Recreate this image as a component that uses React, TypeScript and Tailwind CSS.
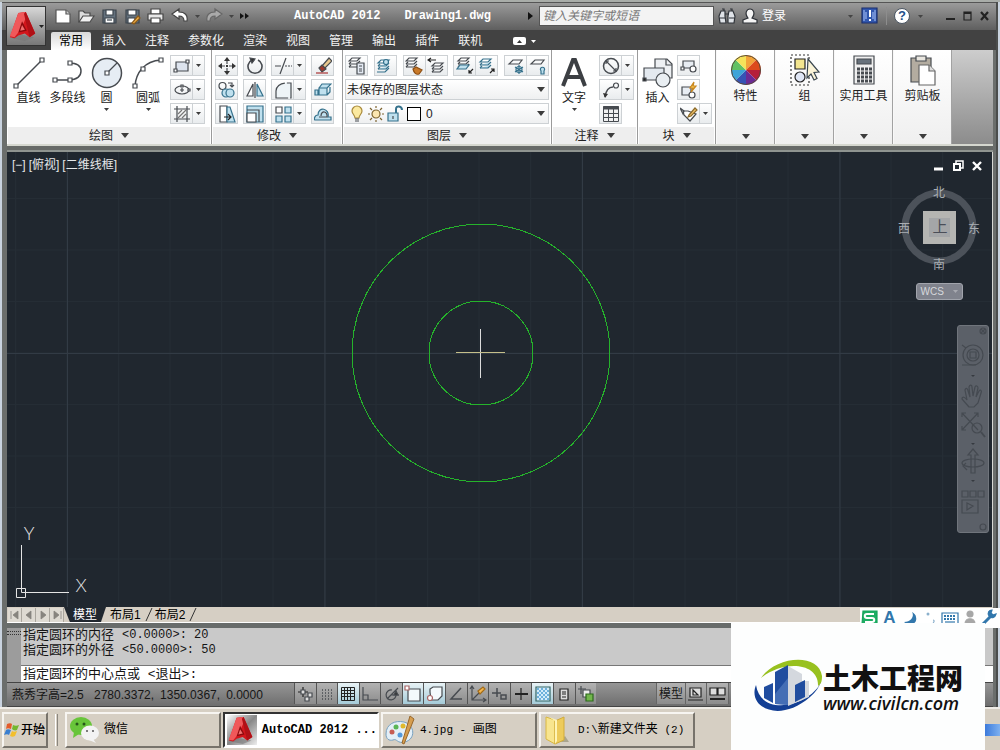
import React from 'react';

type Kids = { children?: React.ReactNode };

const CJK = "font-['Liberation_Sans','Noto_Sans_CJK_SC',sans-serif]";
const MONO = "font-['Liberation_Mono','Noto_Sans_CJK_SC',monospace]";

function Ico({ w = 18, h = 18, s = '#474b50', children }: Kids & { w?: number; h?: number; s?: string }) {
  return (
    <svg width={w} height={h} viewBox={`0 0 ${w} ${h}`} fill="none" stroke={s} strokeWidth="1.2" className="shrink-0" aria-hidden="true">
      {children}
    </svg>
  );
}

function Down({ color = '#3c3c3c', big = false }: { color?: string; big?: boolean }) {
  return big ? (
    <svg width="8" height="5" viewBox="0 0 8 5" aria-hidden="true"><path d="M0 0h8L4 5z" fill={color} /></svg>
  ) : (
    <svg width="5" height="3" viewBox="0 0 5 3" aria-hidden="true"><path d="M0 0h5L2.5 3z" fill={color} /></svg>
  );
}

const cell = 'flex h-[21px] items-center justify-center border border-[#cdd1d4] bg-linear-to-b from-white to-[#e9ecee]';

function Tool({ name, children }: Kids & { name: string }) {
  return <button aria-label={name} className={`${cell} w-[23px]`}>{children}</button>;
}

function Split({ name, children }: Kids & { name: string }) {
  return (
    <div className="flex">
      <button aria-label={name} className={`${cell} w-[23px]`}>{children}</button>
      <button aria-label={`${name}选项`} className={`${cell} w-[12px] border-l-0`}><Down /></button>
    </div>
  );
}

function Pair({ children }: Kids) {
  return <div className="flex -space-x-px">{children}</div>;
}

function Big({ label, arrow, wide, children }: Kids & { label: string; arrow?: boolean; wide?: boolean }) {
  return (
    <button className={`flex flex-col items-center ${wide ? 'w-[44px]' : 'w-[39px]'}`}>
      <span className="flex h-[36px] items-center">{children}</span>
      <span className="text-[12px] leading-[14px] whitespace-nowrap">{label}</span>
      <span className="flex h-[8px] items-center">{arrow && <Down />}</span>
    </button>
  );
}

function Panel({ title, width, children }: Kids & { title: string; width: string }) {
  return (
    <section className={`flex shrink-0 flex-col border-r border-[#9b9b9b] bg-white ${width}`}>
      <div className="flex flex-1 pt-[5px]">{children}</div>
      <button className="mx-px flex h-[17px] items-center justify-center gap-2 bg-[#eeeeee] text-[12px] leading-[16px]">
        {title}<Down big />
      </button>
    </section>
  );
}

function Collapsed({ title, children }: Kids & { title: string }) {
  return (
    <button className="flex w-[59px] shrink-0 flex-col items-center border-x border-[#a2a2a2] border-l-[#f8f8f8] bg-linear-to-b from-white to-[#efefef] pt-[3px]">
      <span className="flex h-[34px] items-center">{children}</span>
      <span className="mt-[2px] text-[12px] leading-[14px] whitespace-nowrap">{title}</span>
      <span className="mt-auto mb-[5px]"><Down big /></span>
    </button>
  );
}

function RedA({ size }: { size: number }) {
  return (
    <svg width={size} height={size} viewBox="0 0 28 32" aria-hidden="true">
      <path d="M2 29 11 25l15 3-10 4z" fill="#777" opacity=".6" />
      <path d="M9 2 17 1l10 23-6 4-5-4-7 2-4 3-5-1z" fill="#d3161c" />
      <path d="M9 2 16 1l2 4-6 14-7 9-5-1z" fill="#f0585a" />
      <path d="m15 3 2-2 10 23-6 4z" fill="#b01016" />
      <path d="m13 11 5 10-9 2z" fill="#8d090d" />
      <path d="m13 15 3 5-5 1z" fill="#f07070" />
    </svg>
  );
}

function Layers({ x = 1, y = 2 }: { x?: number; y?: number }) {
  return (
    <g transform={`translate(${x} ${y})`}>
      <path d="M4 1h8L9 4H1z" fill="#fff" /><path d="M1 7h8l3-3M1 10h8l3-3" /><path d="M1 7l2-2M1 10l2-2" />
    </g>
  );
}

function Blue({ children }: Kids) {
  return <g stroke="#35718c" fill="#bfe0ee">{children}</g>;
}

function TitleBar() {
  return (
    <div className="flex h-[28px] items-center pr-1 text-white">
      <div className="flex items-center gap-[5px] pl-[8px]">
        <button aria-label="新建"><Ico s="#555"><path d="M2 3h10l4 4v9H2z" fill="#fff" /><path d="M12 3v4h4" fill="#ccc" /></Ico></button>
        <button aria-label="打开"><Ico s="#4a4a4a"><path d="M2 15V4h4l2 2h5v3" fill="#ddd" /><path d="M2 15 6 9h11l-4 6z" fill="#f1f1f1" /></Ico></button>
        <button aria-label="保存"><Ico s="#3d454d"><path d="M3 3h13v13H3z" fill="#65727e" /><path d="M6 3h7v5H6zM5 11h9v5H5z" fill="#fff" /><path d="M7 13h5" /></Ico></button>
        <button aria-label="另存为"><Ico s="#3d454d"><path d="M3 3h13v13H3z" fill="#65727e" /><path d="M5 3h8v5H5zM5 11h7v5H5z" fill="#fff" /><path d="m9 16 6-7 2 2-6 6z" fill="#f0b04a" stroke="#8b5b1a" /></Ico></button>
        <button aria-label="打印"><Ico s="#444"><path d="M5 2h9v5H5z" fill="#fff" /><path d="M2 7h15v6H2z" fill="#e8e8e8" /><path d="M5 11h9v5H5z" fill="#fff" /></Ico></button>
        <button aria-label="放弃" className="ml-[2px] flex items-center gap-[6px]"><Ico s="#444"><path d="m1 7 7-5v3c6 0 9 3 8 9h-3c0-3-1-5-5-5v3z" fill="#fff" /></Ico><Down color="#444" /></button>
        <button aria-label="重做" className="flex items-center gap-[6px]"><Ico s="#666"><path d="m17 7-7-5v3c-6 0-9 3-8 9h3c0-3 1-5 5-5v3z" fill="#a9a9a9" /></Ico><Down color="#444" /></button>
        <button aria-label="更多"><Ico w={12} h={10}><path d="m1 2 4 3-4 3zM6 2l4 3-4 3z" fill="#111" stroke="none" /></Ico></button>
      </div>
      <h1 className={`ml-[43px] flex gap-[24px] text-[12px] leading-[16px] font-bold whitespace-nowrap ${MONO}`}>
        <span>AutoCAD 2012</span><span>Drawing1.dwg</span>
      </h1>
      <div className="ml-auto pr-[5px]"><Ico w={6} h={10}><path d="m0 1 5 4-5 4z" fill="#111" stroke="none" /></Ico></div>
      <input aria-label="搜索" placeholder="键入关键字或短语" className="h-[20px] w-[175px] border border-[#555] bg-[#f3f3f3] px-[3px] text-[12px] text-black italic placeholder:text-[#777]" />
      <button aria-label="查找" className="ml-[4px]"><Ico s="#2e3238"><path d="M3 4h4v5l1 7H2l-1-7zM11 4h4l2 5-1 7h-6V9z" fill="#dfe3e8" /><path d="M7 7h4M4 2h2v2M12 2h2v2M2 11h5M11 11h5" /></Ico></button>
      <button className="ml-[5px] flex items-center gap-[3px] text-[12px]"><Ico s="#2e3238"><path d="M2 16v-3l5-2C3 6 6 2 9 2s6 4 2 9l5 2v3z" fill="#f5f5f5" /></Ico>登录</button>
      <div className="ml-[62px]"><Down color="#444" /></div>
      <button aria-label="交换" className="ml-[8px]"><Ico w={18} s="#1c2f6d"><path d="M1 1h15v15H1z" fill="#3157ae" /><path d="M3 3v11M5 5v7M14 3v11M12 5v7" stroke="#9ab5ee" /><path d="M9 3v7M9 12v2" stroke="#fff" strokeWidth="2" /></Ico></button>
      <span className="mx-[7px] h-[18px] w-px bg-[#8d8d8d]" />
      <button aria-label="帮助" className="flex items-center gap-[8px]">
        <span className="flex size-[16px] items-center justify-center rounded-full border border-[#4b5663] bg-white text-[13px] leading-[14px] font-bold text-[#23508a]">?</span>
        <Down color="#444" />
      </button>
      <div className="flex gap-[3px] pl-[21px]">
        <button aria-label="最小化"><Ico w={14} h={12} s="#222"><path d="M2 9h9" strokeWidth="2" /></Ico></button>
        <button aria-label="最大化"><Ico w={14} h={12} s="#222"><path d="M3 2h7v8H3z" /><path d="M3 3h7" strokeWidth="2" /></Ico></button>
        <button aria-label="关闭"><Ico w={14} h={12} s="#222"><path d="m3 2 7 8M10 2l-7 8" strokeWidth="2.2" /></Ico></button>
      </div>
    </div>
  );
}

const TABS = ['常用', '插入', '注释', '参数化', '渲染', '视图', '管理', '输出', '插件', '联机'];

function Header() {
  return (
    <header className="relative flex bg-[#424242]">
      <div className="absolute inset-x-0 top-0 h-[28px] border-t border-[#555] bg-linear-to-b from-[#9b9b9b] to-[#5f5f5f]" />
      <button aria-label="应用程序菜单" className="relative mt-[4px] ml-[4px] flex h-[40px] w-[40px] items-center justify-center gap-px border border-[#333] bg-linear-to-b from-[#d8d8d8] to-[#777]">
        <RedA size={30} /><Down color="#222" />
      </button>
      <div className="relative min-w-0 flex-1">
        <TitleBar />
        <nav className="flex h-[20px] items-end gap-[3px] pl-[5px] text-[12px] text-[#f2f2f2]">
          {TABS.map((t, i) => (
            <button key={t} className={i === 0 ? 'h-[18px] rounded-t-[2px] bg-linear-to-b from-[#d9d9d9] to-white px-2 leading-[16px] text-black' : 'h-[18px] px-2 leading-[16px]'}>{t}</button>
          ))}
          <button aria-label="最小化功能区" className="ml-[20px] flex h-[18px] items-center gap-[5px]">
            <span className="flex h-[8px] w-[13px] items-center justify-center rounded-[2px] bg-white"><svg width="5" height="3" aria-hidden="true"><path d="M0 3h5L2.500 0z" fill="#333" /></svg></span>
            <Down color="#fff" />
          </button>
        </nav>
      </div>
    </header>
  );
}

const col = 'flex flex-col gap-[3px]';

function Ribbon() {
  return (
    <div className="flex h-[94px] bg-linear-to-b from-[#cdcdcd] to-[#8c8c8c] text-[#222]">
      <Panel title="绘图" width="w-[205px]">
        <div className="flex pl-[2px]">
          <Big label="直线"><Ico w={32} h={32}><path d="M4 28 28 4" strokeWidth="1.500" /><path d="M1 27h4v4H1zM27 1h4v4h-4z" fill="#fff" /></Ico></Big>
          <Big label="多段线"><Ico w={32} h={32}><path d="M3 23h14c8 0 12-4 12-9S25 6 17 6" strokeWidth="1.500" /><path d="M1 21h4v4H1zM16 21h4v4h-4zM16 4h4v4h-4z" fill="#fff" /></Ico></Big>
          <Big label="圆" arrow><Ico w={32} h={32}><circle cx="16" cy="16" r="14.500" fill="#e6edf4" strokeWidth="1.500" /><path d="M16 16 26 6" /><path d="M14 14h4v4h-4z" fill="#fff" /></Ico></Big>
          <Big label="圆弧" arrow wide><Ico w={32} h={32}><path d="M3 29C4 16 12 4 29 3" strokeWidth="1.500" /><path d="M1 27h4v4H1zM9 10h4v4H9zM27 1h4v4h-4z" fill="#fff" /></Ico></Big>
        </div>
        <div className={col}>
          <Split name="矩形"><Ico><path d="M3 5h12v9H3z" fill="#dde4ee" /><path d="M1 12h3v3H1zM13 3h3v3h-3z" fill="#fff" /></Ico></Split>
          <Split name="椭圆"><Ico><ellipse cx="9" cy="9" rx="7" ry="4" /><path d="M9 7v4M7 9h4M15 8h2v2h-2zM8 4h2v2H8z" fill="#fff" /></Ico></Split>
          <Split name="图案填充"><Ico><path d="M4 1v16M14 1v16M1 4h16M1 14h16" /><path d="m5 9 4-4M5 13l8-8M9 13l4-4" stroke="#777" /></Ico></Split>
        </div>
      </Panel>

      <Panel title="修改" width="w-[131px]">
        <div className="ml-[3px] flex gap-[5px]">
          <div className={col}>
            <Tool name="移动"><Ico><path d="M9 2v14M2 9h14" strokeDasharray="5 4" /><path d="m9 0 3 4H6zM9 18l3-4H6zM0 9l4-3v6zM18 9l-4-3v6zM8 8h2v2H8z" fill="#333" stroke="none" /></Ico></Tool>
            <Tool name="复制"><Ico><circle cx="4.500" cy="5" r="3.500" /><Blue><circle cx="8" cy="12" r="4" /><circle cx="12" cy="12" r="4" /></Blue><path d="M10 2h4v3m-2-1 2 2 2-2" /></Ico></Tool>
            <Tool name="拉伸"><Ico><path d="M2 1h7v16H2z" fill="#fff" /><Blue><path d="M9 2h3l5 15H9z" /></Blue><path d="M6 12h7m-3-3 3 3-3 3" stroke="#222" /></Ico></Tool>
          </div>
          <div className={col}>
            <Tool name="旋转"><Ico><path d="M6 3a7 7 0 1 0 6 0" strokeWidth="1.600" /><path d="m4 1 5 1-3 4z" fill="#333" /></Ico></Tool>
            <Tool name="镜像"><Ico><path d="M7 3v12H1z" fill="#fff" /><path d="M9 1v16" /><Blue><path d="M11 3v12h6z" /></Blue></Ico></Tool>
            <Tool name="缩放"><Ico><Blue><path d="M1 1h16v16H1z" /></Blue><path d="M1 8h9v9H1z" fill="#fff" /><path d="M1 5h12v12" /></Ico></Tool>
          </div>
          <div className={col}>
            <Split name="修剪"><Ico><path d="M1 9h6m5-8L6 17" /><path d="M11 9h7" strokeDasharray="2 1" /></Ico></Split>
            <Split name="圆角"><Ico><path d="M2 17V10C2 5 7 2 12 2h5v15z" fill="#eef4f7" strokeDasharray="20 2" /></Ico></Split>
            <Split name="阵列"><Ico><path d="M2 2h6v6H2z" fill="#fff" /><Blue><path d="M11 2h6v6h-6zM2 11h6v6H2zM11 11h6v6h-6z" /></Blue></Ico></Split>
          </div>
          <div className={col}>
            <Tool name="删除"><Ico><path d="m8 9 7-8 3 3-7 7z" fill="#e9c88e" /><path d="m5 11 3-3 4 4-4 3z" fill="#a0382b" /><path d="M2 16h12" stroke="#a33" /></Ico></Tool>
            <Tool name="分解"><Ico><Blue><path d="M5 7h8v7H5zM5 7l3-4h9l-4 4M13 14l3-3V6M1 9h3v5H1z" /></Blue></Ico></Tool>
            <Tool name="偏移"><Ico><Blue><path d="M1 15h16v-3h-3c2-9-10-11-10-2-4 0-4 5-3 5z" /></Blue><path d="M5 12h8c1-6-6-7-6-1" /></Ico></Tool>
          </div>
        </div>
      </Panel>

      <Panel title="图层" width="w-[209px]">
        <div className={`${col} mx-[2px] flex-1`}>
          <div className="flex justify-between">
            <Tool name="图层特性"><Ico><Layers x={0} y={0} /><path d="M9 6h7v11H9z" fill="#e4eaf3" /><path d="M11 9h3M11 12h3M11 14h3" /></Ico></Tool>
            <Tool name="图层匹配"><Ico><Blue><Layers /><path d="M1 15h8l4-4" fill="none" /><circle cx="10" cy="5" r="2.500" /></Blue></Ico></Tool>
            <Pair>
              <Tool name="匹配"><Ico><Layers x={0} y={0} /><path d="m8 12 3-2 6 3-3 4c-3 1-5-1-6-5z" fill="#c97a2a" stroke="#8d4f14" /></Ico></Tool>
              <Tool name="上一个"><Ico><Layers x={4} y={5} /><path d="M9 3H2m2-2L1 3l3 2" stroke="#222" /></Ico></Tool>
            </Pair>
            <Pair>
              <Tool name="隔离"><Ico><Layers x={1} y={0} /><Blue><path d="M4 8h9l-3 4H1z" /></Blue><path d="m17 12-4 4m0-3v3h3" stroke="#222" /></Ico></Tool>
              <Tool name="取消隔离"><Ico><Blue><Layers x={1} y={1} /></Blue><path d="m12 16 4-4m-3 0h3v3" stroke="#222" /></Ico></Tool>
            </Pair>
            <Pair>
              <Tool name="冻结"><Ico><path d="M6 3h9l-3 4H2z" /><g stroke="#35718c"><path d="M12 8v9M8 10l8 5M16 10l-8 5" /><circle cx="12" cy="12.500" r="3" /></g></Ico></Tool>
              <Tool name="关闭图层"><Ico><path d="M6 3h9l-3 4H2z" /><Blue><path d="M12 14v3h3v-3c3-5-6-5-3 0z" /></Blue></Ico></Tool>
            </Pair>
          </div>
          <div className="relative">
            <select aria-label="图层状态" className="block h-[21px] w-full appearance-none border border-[#cdd1d4] bg-linear-to-b from-white to-[#eff0f1] pl-[1px] text-[12px] leading-[18px]">
              <option>未保存的图层状态</option>
            </select>
            <span className="pointer-events-none absolute inset-y-0 right-[4px] flex items-center"><Down big /></span>
          </div>
          <button aria-label="图层 0" className="flex h-[21px] items-center gap-[2px] border border-[#cdd1d4] bg-linear-to-b from-white to-[#eff0f1] px-[3px] text-[12px]">
            <Ico w={16}><path d="M6 13c0-3-3-4-3-7a5 5 0 0 1 10 0c0 3-3 4-3 7z" fill="#fbe9a0" stroke="#a98a3c" /><path d="M6 14h4M6 16h4" /></Ico>
            <Ico><circle cx="9" cy="9" r="4" fill="#fbe6b0" stroke="#7d6430" /><path d="M9 1v2M9 15v2M1 9h2M15 9h2M3 3l2 2M13 13l2 2M15 3l-2 2M5 13l-2 2" stroke="#7d6430" /></Ico>
            <Ico><Blue><path d="M1 8h10v8H1z" /></Blue><path d="M9 8V4c0-4 6-3 6 1" stroke="#35718c" strokeWidth="2" /><path d="M6 11v3" /></Ico>
            <span className="size-[14px] border border-black bg-white" />
            <span className="pl-[3px] leading-[14px]">0</span>
            <span className="ml-auto"><Down big /></span>
          </button>
        </div>
      </Panel>

      <Panel title="注释" width="w-[86px]">
        <Big label="文字" arrow wide><svg width="28" height="30" viewBox="0 0 28 30" aria-hidden="true"><path d="M3 28 13 2h2l10 26M7 19h14" fill="none" stroke="#3c3f43" strokeWidth="4" /></svg></Big>
        <div className={`${col} ml-[3px]`}>
          <Split name="标注"><Ico><circle cx="9" cy="9" r="7.500" strokeWidth="1.500" /><path d="m4 4 10 10M4 7V4h3M14 11v3h-3" /></Ico></Split>
          <Split name="引线"><Ico><path d="M3 16C4 9 7 6 11 6" strokeWidth="1.500" /><circle cx="14" cy="4.500" r="2.500" /><path d="m1 12 2 5 3-4z" fill="#333" stroke="none" /></Ico></Split>
          <Tool name="表格"><Ico><path d="M1.500 1.500h15v15h-15zM2 8.500h14M2 12.500h14M6.500 4v12M11.500 4v12" fill="#f1f1f1" strokeWidth="1" /><path d="M1 3h16" strokeWidth="3" /></Ico></Tool>
        </div>
      </Panel>

      <Panel title="块" width="w-[78px]">
        <Big label="插入"><Ico w={32} h={32}><path d="M13 2h12l5 5v14H13z" fill="#edf0f3" /><path d="M24 2v6h6" /><path d="M2 11h20v12H2z" fill="#e3e9ef" /><circle cx="21" cy="23" r="7" fill="#e9eef2" /><path d="M1 21h3v3H1z" fill="#222" /></Ico></Big>
        <div className={col}>
          <Tool name="创建"><Ico><path d="M3 4h11v7H3z" fill="#e8edf3" /><circle cx="13" cy="12" r="3" fill="#fff" /><path d="M1 10h3v3H1z" fill="#fff" /></Ico></Tool>
          <Tool name="编辑"><Ico><path d="M2 6h9v8H2z" fill="#e8edf3" /><circle cx="12" cy="14" r="3" fill="#fff" /><path d="m14 1-4 6h3l-2 4 5-6h-3z" fill="#ffd25e" stroke="#c8861c" /></Ico></Tool>
          <Split name="编辑属性"><Ico><path d="M3 6h5l8 3-6 7-6-6z" fill="#fff" /><path d="M0 3l4 3-1 3z" /><path d="m9 10 6-7 2 2-6 6-3 1z" fill="#f0c06a" stroke="#8b6a2a" /></Ico></Split>
        </div>
      </Panel>

      <Collapsed title="特性">
        <svg width="32" height="32" viewBox="-16 -16 32 32" aria-hidden="true">
          {['#f2a33a', '#dd4a1c', '#b51f3a', '#6b2a94', '#3553b5', '#3ea4d8', '#62c163', '#f5e35a'].map((c, i) => (
            <path key={c} d="M0 0V-15A15 15 0 0 1 10.600-10.600z" fill={c} transform={`rotate(${i * 45})`} />
          ))}
          <circle r="14.500" fill="none" stroke="#5b4a3a" />
        </svg>
      </Collapsed>
      <Collapsed title="组">
        <Ico w={32} h={32}><path d="M2 1h18v30H2z" strokeDasharray="2 2" stroke="#333" /><path d="M6 5h10v10H6z" fill="#f3e58f" stroke="#222" /><circle cx="11" cy="23" r="5" fill="#dfe6f5" stroke="#222" /><path d="m19 5 11 13-5 .5 3 6-3 1.500-3-6-4 4z" fill="#fbf4d8" stroke="#39464f" /></Ico>
      </Collapsed>
      <Collapsed title="实用工具">
        <Ico w={24} h={32}><path d="M2 2h20v28H2z" fill="#f0f0f0" /><path d="M5 5h14v5H5z" fill="#68727c" /><path d="M5 15h15M5 19h15M5 23h15M5 27h15" strokeWidth="3" strokeDasharray="3 1" /></Ico>
      </Collapsed>
      <Collapsed title="剪贴板">
        <Ico w={28} h={32}><path d="M2 4h20v24H2z" fill="#b3aca0" /><path d="M7 2h10v5H7z" fill="#e9e6df" /><path d="M10 11h10l6 6v14H10z" fill="#fff" stroke="#666" /><path d="M20 11v6h6" fill="#ddd" stroke="#666" /></Ico>
      </Collapsed>
    </div>
  );
}

function Compass() {
  return (
    <div className="absolute top-[33px] right-[12px] flex w-[82px] flex-col items-center">
      <svg width="82" height="88" viewBox="0 0 82 88" className="text-[12px]" fill="#a9aeb3" textAnchor="middle" role="img" aria-label="视图方位">
        <circle cx="41" cy="42" r="34" fill="none" stroke="#4c525a" strokeWidth="7" />
        <rect x="25" y="26" width="33" height="33" fill="#b5b5b2" />
        <rect x="31" y="33" width="21" height="19" fill="#a4a6a8" />
        <text x="42" y="47" fontSize="15" fill="#4a4e58">上</text>
        <text x="41" y="12">北</text><text x="41" y="84">南</text><text x="6" y="48">西</text><text x="76" y="48">东</text>
      </svg>
      <button className="mt-[10px] flex h-[17px] w-[47px] items-center justify-between rounded-[3px] border border-[#a1a4ac] bg-[#80838d] px-[4px] text-[10px] text-[#d6d8dc]">
        WCS<Down color="#a7a9b0" />
      </button>
    </div>
  );
}

function NavBar() {
  return (
    <div className="absolute top-[173px] right-[3px] h-[208px] w-[32px] rounded-[3px] border border-[#70757c] bg-[#5b6068]">
      <svg width="30" height="206" viewBox="0 0 30 206" fill="none" stroke="#454a51" strokeWidth="1.200" role="img" aria-label="导航栏">
        <circle cx="25" cy="5" r="3" /><path d="m23 3 4 4M27 3l-4 4" />
        <circle cx="15" cy="29" r="10" /><circle cx="15" cy="29" r="6" /><path d="M12 26h6v6h-6zM4 19l4 3M4 39h14" />
        <path d="M13 49h4l-2 2zM13 117h4l-2 2zM13 154h4l-2 2z" fill="#363a40" stroke="none" />
        <path d="M11 81 4 73c0-3 3-2 5 1L7 64c1-3 3-1 3 1l2 6-1-10c1-3 3-2 3 0l1 9 2-9c1-2 3-1 3 1l-2 9 3-6c2-2 3 0 2 2l-3 10-4 4z" />
        <path d="m4 87 16 17M20 87 4 104M4 91v-4h4M16 87h4v4M4 100v4h4" /><circle cx="19" cy="102" r="5" /><path d="m23 106 4 5" strokeWidth="2" />
        <ellipse cx="15" cy="137" rx="11" ry="4" /><path d="M13 147v-18h-3l5-6 5 6h-3v18zM8 137l-3 3 4 4" />
        <path d="M4 165h6v6H4zM12 165h6v6h-6zM20 165h6v6h-6zM4 174h16v13H4zM9 177v7l6-4z" />
        <circle cx="25" cy="201" r="3" />
      </svg>
    </div>
  );
}

function Canvas() {
  return (
    <main className="relative min-h-[400px] flex-1 overflow-hidden border-r border-[#d8d8d4] bg-[#20272f] text-[#e6e8ea]">
      <svg className="absolute inset-0 size-full" aria-label="圆环图形" role="img">
        <defs>
          <pattern id="minor" width="51.500" height="51.500" patternUnits="userSpaceOnUse" x="8" y="46">
            <path d="M0 .5H51.500M.5 0V51.500" stroke="#252d35" fill="none" />
          </pattern>
          <pattern id="major" width="257.500" height="257.500" patternUnits="userSpaceOnUse" x="60" y="201">
            <path d="M0 .5H257.500M.5 0V257.500" stroke="#323b45" fill="none" />
          </pattern>
        </defs>
        <rect width="100%" height="100%" fill="url(#minor)" />
        <rect width="100%" height="100%" fill="url(#major)" />
        <g fill="none" stroke="#25b32b" shapeRendering="crispEdges">
          <circle cx="474" cy="201" r="129" /><circle cx="474" cy="201" r="52" />
        </g>
        <path d="M473.500 177v49" stroke="#dcdcdc" /><path d="M449 200.500h49" stroke="#c5bf8a" />
        <g fill="none" stroke="#e4e4e4"><path d="M14.500 393v47.500H62" /><path d="M9.500 436.500h9v9h-9z" /></g>
        <g fill="#e4e4e4" fontSize="18" className="font-['Lato',sans-serif] font-light" textAnchor="middle">
          <text x="22" y="388">Y</text><text x="74" y="440">X</text>
        </g>
      </svg>
      <div className="absolute top-[5px] left-[5px] flex gap-[3px] text-[12px] leading-[16px]">
        <button>[−]</button><button>[俯视]</button><button>[二维线框]</button>
      </div>
      <div className="absolute top-[7px] right-[8px] flex gap-[5px]">
        <button aria-label="最小化图形"><Ico w={14} h={14} s="#fff"><path d="M2 10h9" strokeWidth="3" /></Ico></button>
        <button aria-label="还原图形"><Ico w={14} h={14} s="#fff"><path d="M5 4V2h7v7h-2" strokeWidth="1.500" /><path d="M3 5h6v6H3z" strokeWidth="2" /></Ico></button>
        <button aria-label="关闭图形"><Ico w={14} h={14} s="#fff"><path d="m3 3 8 8M11 3l-8 8" strokeWidth="2.400" /></Ico></button>
      </div>
      <Compass />
      <NavBar />
    </main>
  );
}

function Slash() {
  return <svg width="8" height="15" viewBox="0 0 8 15" aria-hidden="true"><path d="M1 14 7 1" stroke="#333" /></svg>;
}

function LayoutTabs() {
  const arrows = ['M3 3v8M10 3v8L5 7z', 'M9 3v8L4 7z', 'M5 3v8l5-4z', 'M11 3v8M4 3v8l5-4z'];
  return (
    <div className="flex h-[16px] items-center border-b border-white bg-[#d6cfc4] pl-[1px] text-[12px] leading-[14px] text-black">
      {arrows.map((d) => (
        <button key={d} aria-label="切换布局" className="h-[14px] w-[14px] border-r border-[#aaa69e] bg-[#dedad2]">
          <svg width="13" height="14" viewBox="0 0 13 14" aria-hidden="true"><path d={d} fill="#87847e" stroke="#87847e" strokeWidth=".8" /></svg>
        </button>
      ))}
      <button className="h-[15px] w-[42px] bg-[#20272f] text-white [clip-path:polygon(0_0,100%_0,88%_100%,14%_100%)]">模型</button>
      <button className="pl-[4px] whitespace-nowrap">布局1</button>
      <span className="pl-[4px]"><Slash /></span>
      <button className="pl-[2px] whitespace-nowrap">布局2</button>
      <span className="pl-[4px]"><Slash /></span>
    </div>
  );
}

function CommandLine() {
  return (
    <div className="flex border-t-[5px] border-[#686c6b] text-[13px] text-[#151515]">
      <div className="w-[14px] bg-[#9c9c9c] pt-[3px]"><div className="h-[4px] border-y border-dotted border-[#333]" /></div>
      <div className={`min-w-0 flex-1 bg-[#c9c9c9] ${MONO}`}>
        {[['指定圆环的内径', '<0.0000>: 20'], ['指定圆环的外径', '<50.0000>: 50']].map(([a, b]) => (
          <p key={a} className="flex h-[15px] gap-[8px] pl-[2px] leading-[15px]"><span>{a}</span><span className="text-[12px]">{b}</span></p>
        ))}
        <div className="mt-[7px] flex h-[17px] border-t border-[#777] bg-white pl-[2px] leading-[17px]">
          <label htmlFor="cmd" className="whitespace-pre">指定圆环的中心点或 &lt;退出&gt;:</label>
          <input id="cmd" className="min-w-0 flex-1 bg-transparent pl-1 outline-none" />
        </div>
      </div>
    </div>
  );
}

const STATUS: { n: string; on?: boolean; d: React.ReactNode }[] = [
  { n: '推断约束', d: <><path d="M2 7h10M7 2v10" stroke="#222" /><path d="M5 5h4v4H5zM12 8h4v4h-4zM9 12h4v4H9z" fill="#ddd" /></> },
  { n: '捕捉', d: <path d="M4 5h11M4 8h11M4 11h11M4 14h11" strokeDasharray="1 2" strokeWidth="1.500" /> },
  { n: '栅格', on: true, d: <path d="M2.500 2.500h13v13h-13zM5.500 2v14M8.500 2v14M11.500 2v14M2 5.500h14M2 8.500h14M2 11.500h14" stroke="#222" strokeWidth="1" /> },
  { n: '正交', d: <path d="M2 2v13h15M2 10h5v5" /> },
  { n: '极轴', d: <><path d="M13 9a5 5 0 1 1-4-4M4 14 15 3M8 10h8" /><path d="m13 6 2 4h-4z" fill="#333" /></> },
  { n: '对象捕捉', on: true, d: <><path d="M4 4h12v12H4z" fill="#f4fafc" /><path d="M1 1h4v4H1z" fill="#fff" stroke="#a66" /></> },
  { n: '三维捕捉', on: true, d: <><path d="M4 7V4l3-2h9v9l-4 4H5z" fill="#f4fafc" /><circle cx="4" cy="13" r="2.500" fill="#fff" stroke="#a66" /></> },
  { n: '对象追踪', d: <path d="M14 3 4 14h11" strokeWidth="1.500" /> },
  { n: '动态UCS', d: <><path d="M3 2v13h13M3 15 14 4M1 4l2-3 2 3M14 13l3 2-3 2" /><path d="m9 6 5-4 2 2-5 5z" fill="#f3b64f" stroke="#a26b18" /></> },
  { n: '动态输入', d: <path d="M7 3v9M2 8h9M11 10h5v4h-5z" strokeWidth="1.500" /> },
  { n: '线宽', d: <><path d="M3 9h13" stroke="#222" strokeWidth="2" /><path d="M9 3v12" stroke="#222" /></> },
  { n: '透明度', on: true, d: <><path d="M2 2h14v14H2z" fill="#d4ecfa" stroke="#366" /><path d="M3 4h12M3 8h12M3 12h12" stroke="#6db1dc" strokeWidth="2" strokeDasharray="2 2" /><path d="M5 6h10M5 10h10M5 14h10" stroke="#6db1dc" strokeWidth="2" strokeDasharray="2 2" /></> },
  { n: '快捷特性', d: <><path d="M5 4h8v11H5z" fill="#ddd" stroke="#222" /><path d="M7 7h4M7 9h4M7 12h4" stroke="#222" /></> },
  { n: '选择循环', d: <><path d="M4 1v8M1 4h8" /><path d="M6 5h7v7H6z" fill="#eee" /><path d="M9 9h7v7H9z" fill="#72b64c" stroke="#2c6b1b" /></> },
];

function StatusBar() {
  return (
    <footer className="flex h-[25px] items-center border-y border-[#444] bg-linear-to-b from-[#969696] to-[#6e6e6e] text-[12px] text-[#161616]">
      <span className="w-[87px] pl-[5px] whitespace-nowrap">燕秀字高=2.5</span>
      <div className="flex w-[200px] gap-[6px] whitespace-nowrap"><span>2780.3372,</span><span>1350.0367,</span><span>0.0000</span></div>
      <div className="flex h-full w-[302px] shrink-0">
        {STATUS.map((s) => (
          <button key={s.n} aria-label={s.n} aria-pressed={!!s.on} className={`flex h-[21px] flex-1 items-center justify-center border-l border-[#555] ${s.on ? 'bg-linear-to-b from-[#e8f2f5] to-[#a5cbd8]' : 'bg-linear-to-b from-[#b2b2b2] to-[#8c8c8c]'}`}>
            <Ico>{s.d}</Ico>
          </button>
        ))}
      </div>
      <div className="ml-[60px] flex h-[21px] self-start bg-linear-to-b from-[#b2b2b2] to-[#8c8c8c]">
        <button className="border-x border-[#666] px-[2px]">模型</button>
        <button aria-label="快速查看布局" className="w-[21px] border-r border-[#666] pl-px"><Ico s="#222"><path d="M3 3h11v9H3z" fill="#ddd" /><path d="M6 5v5h5zM1 15h15" /></Ico></button>
        <button aria-label="快速查看图形" className="w-[22px] border-r border-[#666] pl-px"><Ico s="#222"><path d="M2 3h7v7H2zM10 3h7v7h-7z" fill="#ddd" /><path d="M2 14h15" strokeWidth="2" /></Ico></button>
      </div>
    </footer>
  );
}

function Task({ icon, active, children }: Kids & { icon: React.ReactNode; active?: boolean }) {
  return (
    <button className={`flex h-[36px] w-[156px] shrink-0 items-center gap-[5px] border-2 pl-[2px] text-[12px] ${MONO} ${active ? 'border-t-[#333] border-r-white border-b-white border-l-[#333] bg-white font-bold' : 'border-t-[#f7f5f1] border-r-[#77736b] border-b-[#77736b] border-l-[#f7f5f1] bg-[#d6cfc3]'}`}>
      {icon}<span className="whitespace-pre">{children}</span>
    </button>
  );
}

function TaskBar() {
  return (
    <div className="flex h-[43px] items-center border-t-2 border-[#efece6] bg-[#d6cfc3] pl-[2px] text-black">
      <button className="flex h-[36px] w-[46px] shrink-0 items-center border-2 border-t-[#f7f5f1] border-r-[#77736b] border-b-[#77736b] border-l-[#f7f5f1] text-[12px] font-medium whitespace-nowrap">
        <svg width="17" height="16" viewBox="0 0 17 16" className="shrink-0" aria-hidden="true"><path d="M3 2c2-1 4-1 5 0L7 7c-2-1-4-1-5 0z" fill="#e45b2b" /><path d="M9 3c2 1 4 1 6 0l-2 5c-2 1-4 0-5-1z" fill="#73b72f" /><path d="M2 8c1-1 3-1 5 0l-2 5c-1-1-3-1-5 0z" fill="#3a7fd0" /><path d="M8 9c1 1 3 1 5 0l-2 5c-2 1-3 1-5 0z" fill="#f3bf2c" /></svg>
        开始
      </button>
      <span className="mx-[7px] h-[32px] w-[3px] border-r border-l border-r-[#8a867e] border-l-white" />
      <div className="flex gap-[2px]">
        <Task icon={<svg width="30" height="28" viewBox="0 0 30 28" aria-hidden="true"><ellipse cx="12" cy="10" rx="11" ry="9" fill="#68c53a" /><path d="m5 16-1 6 6-4z" fill="#68c53a" /><circle cx="8" cy="8" r="1.500" fill="#27571a" /><circle cx="15" cy="8" r="1.500" fill="#27571a" /><ellipse cx="21" cy="17" rx="9" ry="7.500" fill="#f3f3f3" /><path d="m24 23 3 4-7-3z" fill="#f3f3f3" /><circle cx="18" cy="15" r="1" fill="#555" /><circle cx="24" cy="15" r="1" fill="#555" /></svg>}>微信</Task>
        <Task active icon={<span className="flex h-[30px] w-[30px] items-center bg-linear-to-br from-white via-[#888] to-[#eee]"><RedA size={28} /></span>}>AutoCAD 2012 ...</Task>
        <Task icon={<svg width="30" height="30" viewBox="0 0 30 30" aria-hidden="true"><path d="M1 19C1 9 10 5 19 7c11 3 12 17 1 20-8 2-8-4-12-2-4 1-7-1-7-6z" fill="#e3eff7" stroke="#78a1c0" /><circle cx="7" cy="17" r="2.500" fill="#c65d54" /><circle cx="11" cy="12" r="2.500" fill="#59b556" /><circle cx="18" cy="11" r="2.500" fill="#e0b92c" /><circle cx="15" cy="20" r="2.500" fill="#5399db" /><path d="m25 1 4 3-10 25-2-1z" fill="#d69e4f" stroke="#98672b" /></svg>}>
          <span className="text-[11px]">4.jpg - </span>画图
        </Task>
        <Task icon={<svg width="30" height="30" viewBox="0 0 30 30" aria-hidden="true"><path d="M16 27h10l-4-6z" fill="#aaa58f" /><path d="m3 2 9 3v24l-9-5z" fill="#f8e58e" stroke="#d9b740" /><path d="m12 6 9-4v23l-9 4z" fill="#edcb5b" stroke="#d1ab39" /><path d="m6 2 8 3v21l-2 3V6z" fill="#fff4b5" /></svg>}>
          <span className="text-[11px]">D:\</span>新建文件夹<span className="text-[11px]"> (2)</span>
        </Task>
      </div>
      <span className="ml-auto h-[12px] w-[18px] bg-linear-to-r from-[#2f6fd6] to-[#7db0f0]" />
    </div>
  );
}

function InputMethodBar() {
  return (
    <div className="absolute right-0 bottom-[122px] flex h-[20px] w-[140px] items-center gap-[4px] bg-white pr-[3px] pl-px">
      <Ico w={17} s="#17a35c"><path d="M2 2h14v14H1z" fill="#1fae64" /><path d="M13 5H6c-3 0-3 4 0 4h5c3 0 3 4 0 4H4" stroke="#fff" strokeWidth="2" /></Ico>
      <span className="w-[15px] text-center text-[17px] leading-[18px] font-bold text-[#3277ac]">A</span>
      <Ico><path d="M11 3c3 5-2 10-8 10 5 5 14 2 12-5 0-2-2-4-4-5z" fill="#3277ac" stroke="none" /></Ico>
      <Ico w={14}><circle cx="5" cy="5" r="1.500" fill="#8bb0cc" stroke="none" /><path d="M10 11c2 0 1 3-1 4" stroke="#8bb0cc" /></Ico>
      <Ico w={18} s="#3277ac"><path d="M1 4h16v11H1z" fill="#fff" /><path d="M3 7h12M3 10h12" strokeDasharray="2 1" strokeWidth="2" /><path d="M4 13h10" /></Ico>
      <Ico w={14} s="#a7a7a7"><circle cx="7" cy="5" r="3" fill="#a7a7a7" /><path d="M2 15c0-7 10-7 10 0z" fill="#a7a7a7" /></Ico>
      <Ico w={16} s="#3277ac"><path d="m2 15 8-8" strokeWidth="3" /><path d="M11 1C8 1 6 4 8 7s6 2 7-2l-3 1-2-2z" fill="#3277ac" /></Ico>
    </div>
  );
}

function SiteBadge() {
  return (
    <aside className="absolute right-[15px] bottom-0 flex h-[127px] w-[254px] items-center justify-center bg-[#fdfefe] text-[#111]">
      <svg width="70" height="58" viewBox="0 0 70 58" aria-hidden="true">
        <path d="M8 20C22-2 66-6 69 18c0 6-1 8-4 10C66 4 30 2 8 20z" fill="#98c11f" />
        <path d="M3 27c-9 22 23 39 54 12 6-5 9-10 11-15C57 48 8 60 3 27z" fill="#133f94" />
        <path d="M35 8l14 8v7h7v16l-21 9z" fill="#d4d8de" />
        <path d="m22 14 13-7v40l-13-1z" fill="#204d9f" /><path d="m11 29 9-4v20l-9-5z" fill="#204d9f" /><path d="m42 27 10-5v17l-10 5z" fill="#204d9f" />
        <path d="M22 36 35 20v27l-13-1z" fill="#5e85c4" opacity=".6" />
      </svg>
      <div>
        <p className="text-[28px] leading-[32px] font-black font-['Noto_Sans_CJK_SC',sans-serif]">土木工程网</p>
        <a href="#site" className="block text-[18px] leading-[20px] font-semibold italic font-['Open_Sans',sans-serif]">www.civilcn.com</a>
      </div>
    </aside>
  );
}

export default function App() {
  return (
    <div className={`relative flex min-h-screen flex-col bg-[#c9d3df] ${CJK}`}>
      <div className="h-[2px] bg-[#a9ada9]" />
      <div className="mr-[2px] ml-[2px] flex min-w-0 flex-1 flex-col border-r-[2px] border-[#4b4d4c]">
        <Header />
        <div className="flex flex-1 flex-col border-r-[3px] border-l-[5px] border-[#6b6e6c]">
          <Ribbon />
          <div className="h-[8px] border-t-2 border-b-2 border-t-[#d5d7cf] border-b-[#8f9490] bg-[#666967]" />
          <Canvas />
          <LayoutTabs />
          <CommandLine />
          <StatusBar />
        </div>
      </div>
      <TaskBar />
      <InputMethodBar />
      <SiteBadge />
    </div>
  );
}
